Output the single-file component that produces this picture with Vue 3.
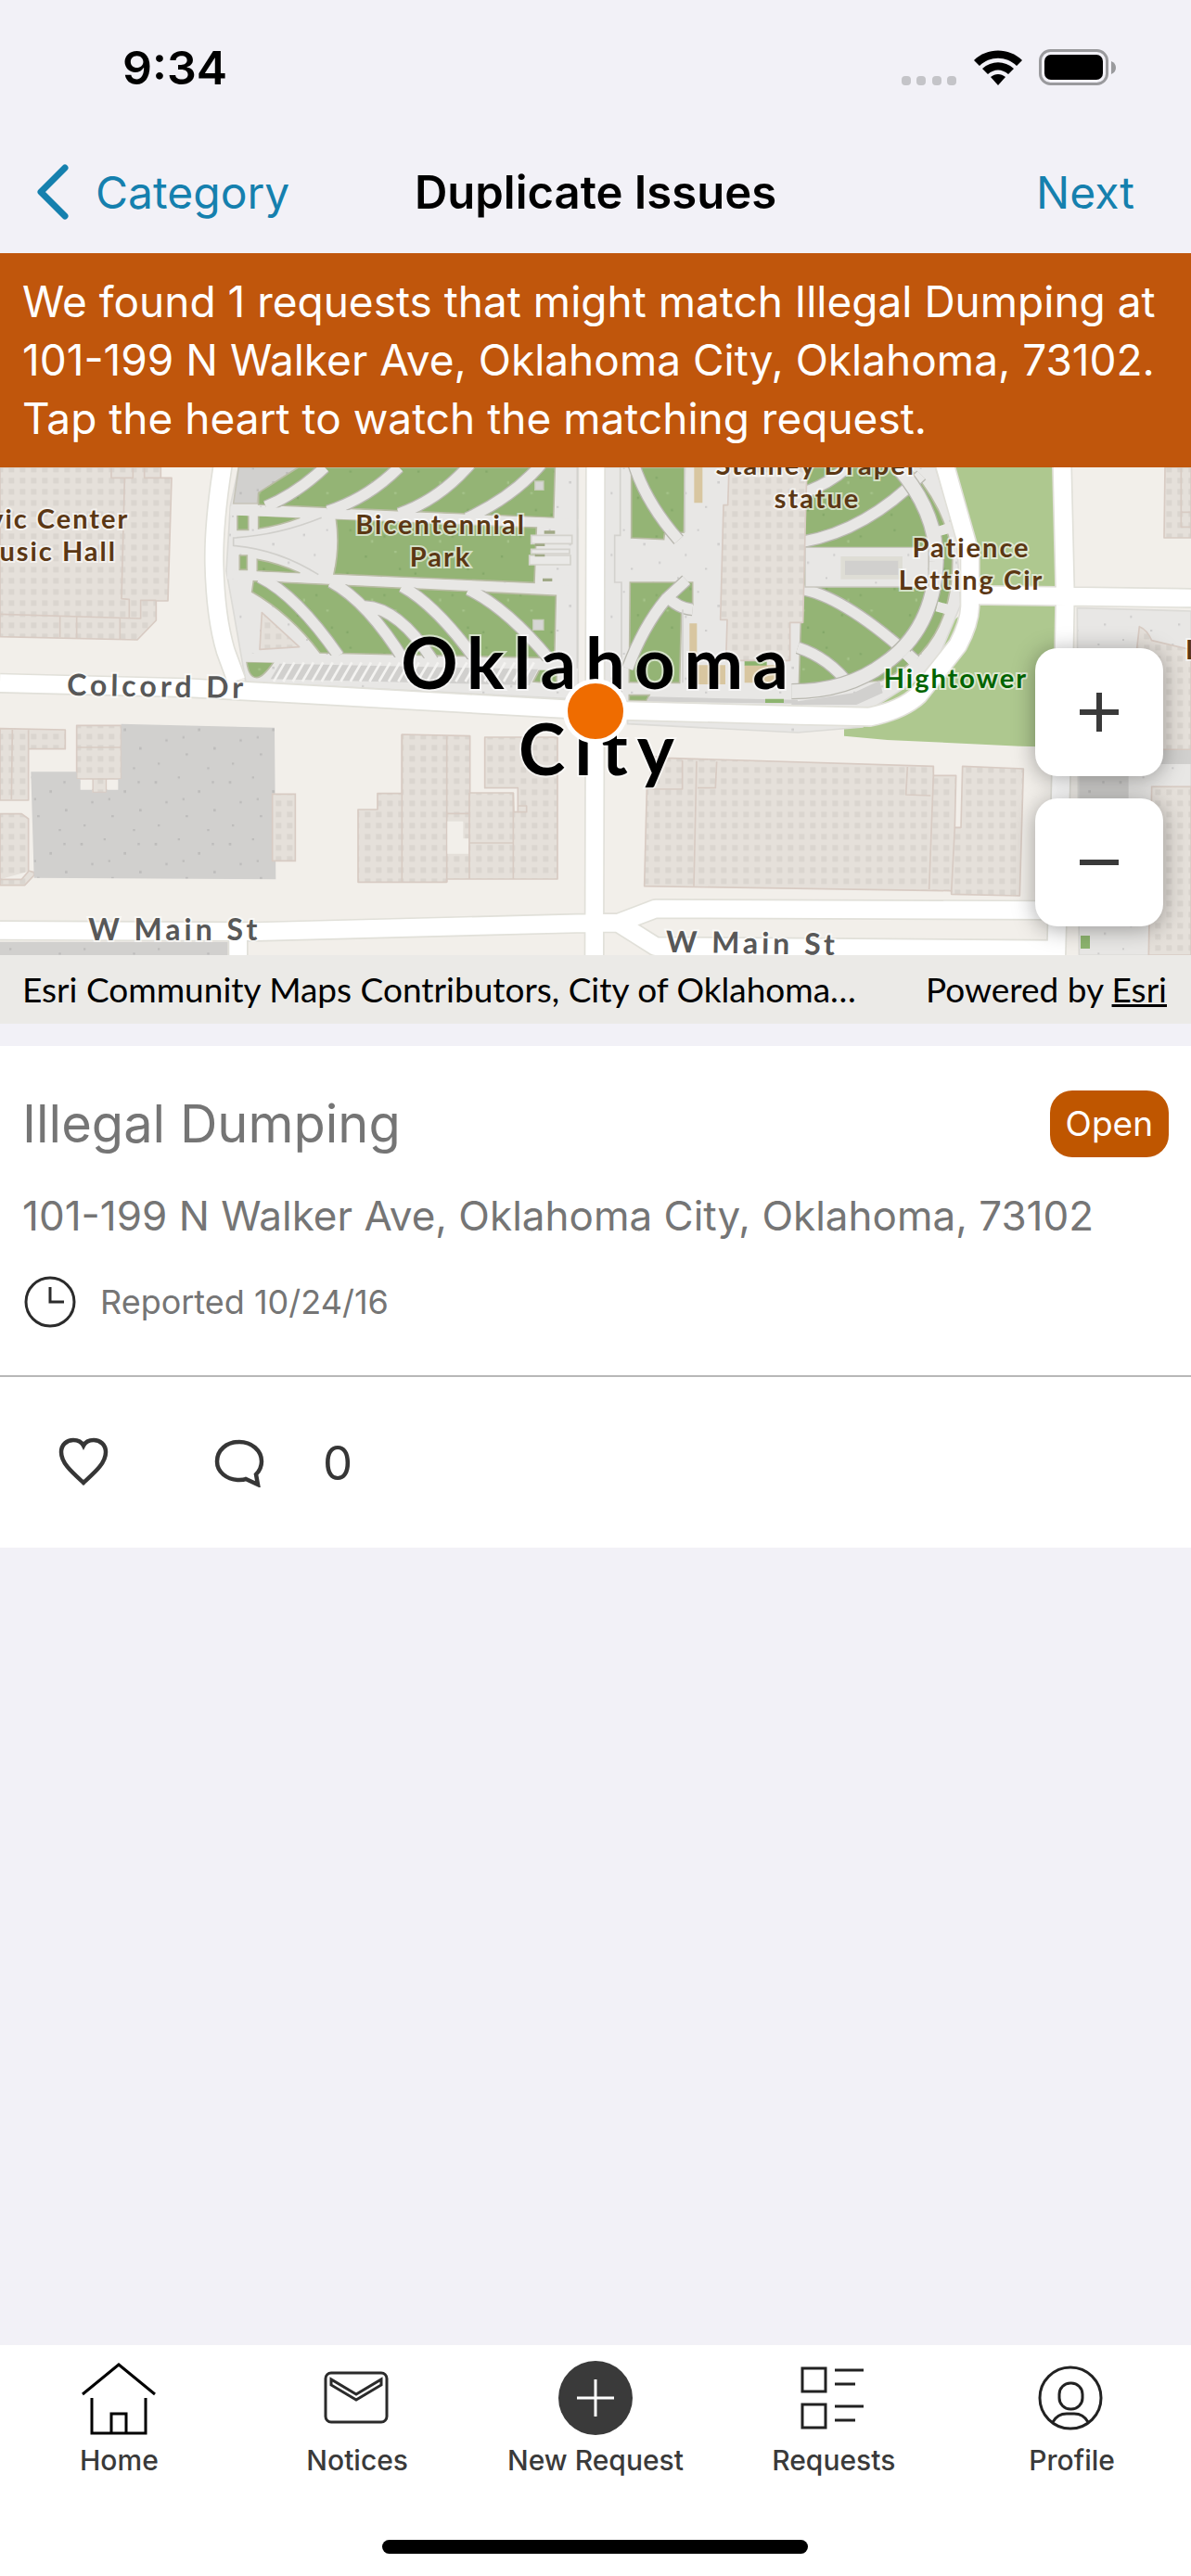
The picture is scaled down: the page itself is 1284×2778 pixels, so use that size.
<script setup>
import { ref } from 'vue'

const address = '101-199 N Walker Ave, Oklahoma City, Oklahoma, 73102'
const issue = { type: 'Illegal Dumping', status: 'Open', reported: '10/24/16', comments: 0 }
const tabs = ['Home', 'Notices', 'New Request', 'Requests', 'Profile']
const stalls = Array.from({ length: 27 }, (_, i) => 885 + i * 31)
const watching = ref(false)
</script>

<template>
  <div class="app">
    <header class="top">
      <div class="status">
        <time class="clock">9:34</time>
        <div class="indicators">
          <svg width="60" height="40" viewBox="0 0 60 40" aria-hidden="true" fill="#c4c4c8">
            <rect x="0" y="29" width="10" height="10" rx="4" /><rect x="16" y="29" width="10" height="10" rx="4" />
            <rect x="33" y="29" width="10" height="10" rx="4" /><rect x="49" y="29" width="10" height="10" rx="4" />
          </svg>
          <svg width="52" height="40" viewBox="0 0 52 40" aria-hidden="true">
            <path d="M0 12C14-2 38-2 52 12L46 18C35 7 17 7 6 18Z" />
            <path d="M9 21C19 12 33 12 43 21L37 27C30 21 22 21 15 27Z" />
            <path d="M18 30C23 26 29 26 34 30L26 39Z" />
          </svg>
          <svg width="84" height="40" viewBox="0 0 84 40" aria-hidden="true">
            <rect x="1.5" y="1.5" width="72" height="36" rx="11" fill="none" stroke="#9a9a9d" stroke-width="3" />
            <rect x="6" y="6" width="63" height="27" rx="7" />
            <path d="M78 13Q83 15 83 20Q83 25 78 27Z" fill="#9a9a9d" />
          </svg>
        </div>
      </div>
      <nav class="bar">
        <button class="link back" type="button">
          <svg width="36" height="60" viewBox="0 0 36 60" aria-hidden="true">
            <path d="M31 4L5 30L31 56" fill="none" stroke="#1580ae" stroke-width="7" stroke-linecap="round" stroke-linejoin="round" />
          </svg>
          Category
        </button>
        <h1>Duplicate Issues</h1>
        <button class="link next" type="button">Next</button>
      </nav>
    </header>

    <p class="banner">We found 1 requests that might match {{ issue.type }} at<br>{{ address }}.<br>Tap the heart to watch the matching request.</p>

    <section class="map" aria-label="Map">
      <div class="canvas">
        <svg class="tiles" viewBox="0 15 3852 1578" preserveAspectRatio="xMidYMid slice">
          <defs>
            <pattern id="roof" x="28" y="13" width="36" height="36" patternUnits="userSpaceOnUse">
              <rect width="36" height="36" fill="#e5e0da" /><rect width="18" height="18" fill="#dad5cf" />
            </pattern>
            <pattern id="paving" width="240" height="200" patternUnits="userSpaceOnUse">
              <rect width="240" height="200" fill="#e8e7e5" />
              <path d="M20 30h7v7h-7zM95 15h6v6h-6zM160 60h8v7h-8zM55 95h6v7h-6zM210 120h7v7h-7zM120 140h7v6h-7zM30 170h6v6h-6zM190 185h6v6h-6z" fill="#cfcecd" />
            </pattern>
            <pattern id="lot" width="240" height="200" patternUnits="userSpaceOnUse">
              <rect width="240" height="200" fill="#d1d0ce" />
              <path d="M20 30h8v8h-8zM95 15h7v7h-7zM160 60h8v8h-8zM55 95h7v7h-7zM210 120h8v8h-8zM120 140h8v7h-8zM30 170h7v7h-7zM190 185h7v7h-7zM205 30h7v7h-7zM110 85h7v7h-7z" fill="#bdbcbb" />
            </pattern>
            <pattern id="grass" width="220" height="190" patternUnits="userSpaceOnUse">
              <rect width="220" height="190" fill="#94b475" />
              <path d="M30 25h7v7h-7zM140 45h7v7h-7zM80 110h7v7h-7zM190 150h7v7h-7zM20 165h7v7h-7z" fill="#84a869" />
              <path d="M100 60h7v9h-7zM175 95h8v7h-8z" fill="#a5c389" />
            </pattern>
          </defs>

          <rect y="15" width="3852" height="1578" fill="#f2efea" />
          <path d="M3050 15H3440V920L3300 917L2870 897L2730 884V820L3137 465Z" fill="#aec88f" />

          <g fill="url(#paving)" stroke="#dcdbd7" stroke-width="5">
            <path d="M772 15L745 140L732 350L755 480L795 710L1870 765V15Z" />
            <path d="M1955 15H3025L3092 220L3107 460L3040 620L2970 700L2820 795L1955 780Z" />
            <path d="M2030 845L2580 873L2790 855V830H2030Z" />
            <path d="M3484 470L3852 480V1593H3490Z" />
          </g>

          <path d="M772 15H965L836 98L832 132H755Z" fill="url(#lot)" stroke="#c6c4b9" stroke-width="5" />
          <g fill="url(#grass)" stroke="#b9bca4" stroke-width="5">
            <path d="M836 97L965 15H1795L1790 178L836 135Z" />
            <path d="M836 170L970 178Q900 205 836 213Z" />
            <path d="M768 168H803V217H768ZM775 300H799V346H775Z" />
            <path d="M832 313Q900 325 970 357L832 350Z" />
            <path d="M1087 182L1735 210L1728 388L1080 360Q1100 270 1087 182Z" />
            <path d="M820 383L1798 430L1793 632L1035 615Q940 490 815 418Z" />
            <path d="M798 645H885Q850 695 830 695Q805 695 798 645Z" />
            <path d="M2042 15H2215L2212 225L2149 230L2147 248L2042 243Z" />
            <path d="M2038 387H2240V460L2204 475L2198 712L2035 710Z" />
            <path d="M2035 752H2100L2090 770H2035Z" />
            <path d="M2608 15H2940Q3060 150 3080 300Q3085 600 2850 705L2584 725L2600 180Z" />
            <path d="M1725 708L1750 660H1800V715Z" />
          </g>
          <g fill="none" stroke="#b9b8b0" stroke-width="42">
            <path d="M1050 15Q960 100 860 142M1290 15Q1190 115 1060 157M1520 5Q1420 120 1290 165M1750 5Q1660 110 1510 180" />
            <path d="M840 370Q960 430 1095 625M1070 385Q1190 450 1310 645M1300 400Q1410 460 1540 640M1515 410Q1640 470 1780 640M1180 465Q1290 470 1400 640" />
            <path d="M2050 5Q2090 130 2195 250M2030 665Q2080 530 2155 440L2220 380M2155 430Q2190 470 2240 475" />
            <path d="M2600 255Q2800 220 2980 40M2590 100Q2680 70 2740 15M2600 410Q2740 440 2960 640M2580 598Q2680 630 2750 722" />
          </g>
          <g fill="none" stroke="#e8e7e5" stroke-width="34">
            <path d="M1050 15Q960 100 860 142M1290 15Q1190 115 1060 157M1520 5Q1420 120 1290 165M1750 5Q1660 110 1510 180" />
            <path d="M840 370Q960 430 1095 625M1070 385Q1190 450 1310 645M1300 400Q1410 460 1540 640M1515 410Q1640 470 1780 640M1180 465Q1290 470 1400 640" />
            <path d="M2050 5Q2090 130 2195 250M2030 665Q2080 530 2155 440L2220 380M2155 430Q2190 470 2240 475" />
            <path d="M2600 255Q2800 220 2980 40M2590 100Q2680 70 2740 15M2600 410Q2740 440 2960 640M2580 598Q2680 630 2750 722" />
          </g>
          <path d="M2905 15Q3030 160 3028 320Q3020 540 2860 650Q2740 740 2560 740" fill="none" stroke="#b9b8b0" stroke-width="52" />
          <path d="M2905 15Q3030 160 3028 320Q3020 540 2860 650Q2740 740 2560 740" fill="none" stroke="#e8e7e5" stroke-width="44" />
          <g fill="none" stroke="#e8e7e5">
            <path d="M745 155L1300 175L1870 197" stroke-width="30" />
            <path d="M735 362L1290 387L1865 412" stroke-width="28" />
            <path d="M795 630L1870 660" stroke-width="28" />
            <path d="M3035 222L3090 205M3030 465L3085 480M2930 620L2975 665" stroke-width="32" />
          </g>
          <path d="M1040 178Q900 235 755 243V268Q900 280 1030 362" fill="none" stroke="#d0cfcb" stroke-width="5" />
          <path d="M2604 274H3003V402H2604Z" fill="url(#paving)" stroke="#c9c8c0" stroke-width="4" />
          <path d="M2726 310H2912V370H2726Z" fill="#d1d0ce" stroke="#deddd5" stroke-width="14" />
          <path d="M2560 775L2760 745L2845 705L2855 745L2770 783H2560Z" fill="#d1d0ce" />
          <path d="M2100 757L2580 767V779L2092 773Z" fill="#d1d0ce" />
          <path d="M905 650L1740 668L1712 720L875 700Z" fill="#d1d0ce" />
          <path v-for="x in stalls" :key="x" :d="`M${x} 708L${x + 36} 646`" stroke="#f4f3f1" stroke-width="8" />
          <path d="M1718 235H1850V262H1718ZM1718 280H1842V294H1718ZM1712 300H1845V330H1712Z" fill="#eae9e7" stroke="#d3d2cc" stroke-width="5" />
          <path d="M1760 220H1795V230H1760ZM1730 262H1762V270H1730ZM1730 296H1762V304H1730ZM1755 374H1786V384H1755Z" fill="#a1a987" />
          <path d="M1730 60H1758V88H1730ZM1724 508H1758V541H1724Z" fill="#d6d6d4" stroke="#c5cbb8" stroke-width="4" />
          <path d="M1867 15V665M2006 15V235H1988V387H2010V760M2215 15V225M2208 475V712" fill="none" stroke="#d3d2ce" stroke-width="5" />
          <path d="M2245 15H2272V130H2245ZM2230 520H2254V620H2230ZM2256 655H2346V717H2256ZM2408 655H2528V712H2408Z" fill="#d8c6a0" />
          <path d="M2408 640H2480V656H2408ZM2475 764H2535V777H2475ZM3495 1530H3525V1572H3495Z" fill="#8db46f" />

          <g fill="url(#roof)" stroke="#d8cbc3" stroke-width="5" stroke-linejoin="round">
            <path d="M0 15H520V49H555L543 447H505V510L444 573L0 563Z" />
            <path d="M360 15V49H430V15M467 15V49H520M403 52L393 440L418 442V500M0 490L455 504V445H505M194 495V565M248 497V567M388 502V570" fill="none" />
            <path d="M847 485L968 596L840 604Z" />
            <path d="M0 860L211 864V926H92V1092H0ZM40 864L37 1089M92 864V930" />
            <path d="M248 850H392V1023H344V1067H300V1023H248ZM248 921H392M300 1023H344" />
            <path d="M0 1136H70L92 1152V1320L110 1325V1335L80 1367H0ZM0 1348H70L92 1322" />
            <path d="M1158 1122H1221V1070H1300V879L1520 884V1068H1660L1662 1130H1675V1052H1568V888H1803V1347H1445V1357H1158Z" />
            <path d="M1300 879V1357M1445 884V1357M1518 1068V1347M1660 1068V1347M1445 1135H1518M1518 1230H1660M1675 1130H1703V1110H1675" fill="none" />
            <path d="M2150 955L3019 982V1012H3092L3088 1180H3108L3113 982L3310 990L3298 1401L3077 1396V1385L2084 1370L2092 1055L2115 950Z" />
            <path d="M2253 965L2244 1370M2207 962V1056H2092M2318 967L2314 1052H2256M2935 984L2930 1074L3010 1077M3019 1012L3005 1380M3088 1180L3077 1390" fill="none" />
            <path d="M2358 15L2354 137H2340L2330 508H2352L2348 640H2555V517H2597L2605 180L2610 15Z" />
            <path d="M3768 15L3765 243H3852V15ZM3820 15V208H3852M3820 160H3852" />
            <path d="M3685 530Q3710 540 3725 575L3852 605V928H3640Z" />
            <path d="M3725 1048H3852V1593H3715Z" />
          </g>
          <path d="M1447 1160H1498V1216H1515V1265H1447ZM260 1026H298V1056H260ZM346 1026H382V1056H346Z" fill="#f2efea" />
          <path d="M392 845L888 857L892 1348L110 1343L100 1000H248V1023H260V1058H298V1067H344V1058H382V1023H392ZM0 1550H737V1593H0Z" fill="url(#lot)" />
          <path d="M881 1072H955V1288H881Z" fill="url(#roof)" stroke="#d8cbc3" stroke-width="5" />
          <path d="M3490 930H3852V975H3650V1090H3490Z" fill="url(#lot)" />

          <g fill="none" stroke="#e1e0d9" stroke-width="66" stroke-linejoin="round">
            <path d="M721 5Q690 200 693 330Q697 500 730 610L765 705M1926 5L1922 1600M0 713L600 728L1000 750L1850 798L2580 817L2813 822Q2920 800 2972 750L3098 590Q3135 520 3137 465V295L3055 5M3435 5L3445 430L3440 700L3416 1600M3137 428L3852 438M0 1513L830 1517L1926 1489H2000L2120 1443L3400 1448M2000 1489L2120 1565L3430 1575M770 1540V1600" />
          </g>
          <g fill="none" stroke="#fff" stroke-width="56" stroke-linejoin="round">
            <path d="M721 5Q690 200 693 330Q697 500 730 610L765 705M1926 5L1922 1600M0 713L600 728L1000 750L1850 798L2580 817L2813 822Q2920 800 2972 750L3098 590Q3135 520 3137 465V295L3055 5M3435 5L3445 430L3440 700L3416 1600M3137 428L3852 438M0 1513L830 1517L1926 1489H2000L2120 1443L3400 1448M2000 1489L2120 1565L3430 1575M770 1540V1600" />
          </g>

          <g class="place">
            <text x="418" y="213" text-anchor="end">Civic Center</text>
            <text x="378" y="319" text-anchor="end">Music Hall</text>
            <text x="1425" y="230">Bicentennial</text>
            <text x="1425" y="335">Park</text>
            <text x="2643" y="40">Stanley Draper</text>
            <text x="2643" y="147">statue</text>
            <text x="3141" y="305">Patience</text>
            <text x="3141" y="410">Letting Cir</text>
            <text x="3834" y="636" text-anchor="start">L</text>
            <text class="park" x="3091" y="728">Hightower</text>
          </g>
          <g class="street">
            <text x="507" y="757" transform="rotate(1 507 757)">Colcord Dr</text>
            <text x="565" y="1545">W Main St</text>
            <text x="2432" y="1588" transform="rotate(1 2432 1588)">W Main St</text>
          </g>
          <g class="city">
            <text x="1938" y="731">Oklahoma</text>
            <text x="1944" y="1010">City</text>
          </g>
        </svg>
        <span class="pin"></span>
        <div class="zoom">
          <button type="button" aria-label="Zoom in">
            <svg width="42" height="42" viewBox="0 0 42 42"><path d="M0 21H42M21 0V42" stroke="#3a3a3a" stroke-width="6" /></svg>
          </button>
          <button type="button" aria-label="Zoom out">
            <svg width="42" height="42" viewBox="0 0 42 42"><path d="M0 21H42" stroke="#3a3a3a" stroke-width="6" /></svg>
          </button>
        </div>
      </div>
      <footer class="credit">
        <span>Esri Community Maps Contributors, City of Oklahoma…</span>
        <span>Powered by <a href="#esri">Esri</a></span>
      </footer>
    </section>

    <article class="card">
      <div class="details">
        <div class="heading">
          <h2>{{ issue.type }}</h2>
          <span class="badge">{{ issue.status }}</span>
        </div>
        <p class="address">{{ address }}</p>
        <p class="reported">
          <svg width="56" height="56" viewBox="0 0 56 56" aria-hidden="true" fill="none" stroke="#2b2b2b" stroke-width="3">
            <circle cx="28" cy="28" r="26" /><path d="M28 12V28H43" />
          </svg>
          Reported {{ issue.reported }}
        </p>
      </div>
      <div class="actions">
        <button type="button" aria-label="Watch" :aria-pressed="watching" @click="watching = !watching">
          <svg width="54" height="54" viewBox="0 0 54 54" fill="none" stroke="#363636" stroke-width="4.5">
            <path d="M27 49C15 38 3 28 3 16C3 8 9 3 16 3C21 3 25 5 27 9C29 5 33 3 38 3C45 3 51 8 51 16C51 28 39 38 27 49Z" />
          </svg>
        </button>
        <button class="comments" type="button" aria-label="Comments">
          <svg width="54" height="54" viewBox="0 0 54 54" fill="none" stroke="#363636" stroke-width="4.5">
            <path d="M27 5C40 5 51 14 51 26C51 32 48 37 45 40L47 51L34 45C32 46 30 46 27 46C13 46 3 37 3 26C3 14 13 5 27 5Z" />
          </svg>
          <span>{{ issue.comments }}</span>
        </button>
      </div>
    </article>

    <nav class="tabs">
      <a v-for="tab in tabs" :key="tab" href="#tab">
        <svg v-if="tab === 'Home'" width="80" height="80" viewBox="0 0 80 80" fill="none" stroke="#000" stroke-width="3">
          <path d="M1 36L40 4L79 36M11 40V78H69V40M32 78V57H48V78" />
        </svg>
        <svg v-else-if="tab === 'Notices'" width="80" height="80" viewBox="0 0 80 80" fill="none" stroke="#2b2b2b" stroke-width="3">
          <rect x="6" y="13" width="66" height="53" rx="6" /><path d="M12 20V26L39 42L66 26V20L39 36Z" />
        </svg>
        <svg v-else-if="tab === 'New Request'" width="80" height="80" viewBox="0 0 80 80">
          <circle cx="40" cy="40" r="40" fill="#3a3a3a" /><path d="M20 40H60M40 20V60" stroke="#fff" stroke-width="3" />
        </svg>
        <svg v-else-if="tab === 'Requests'" width="80" height="80" viewBox="0 0 80 80" fill="none" stroke="#222" stroke-width="3">
          <path d="M6 8H31V33H6ZM6 47H31V72H6ZM41 10H72M41 25H63M41 49H72M41 64H63" />
        </svg>
        <svg v-else width="80" height="80" viewBox="0 0 80 80" fill="none" stroke="#222" stroke-width="3">
          <circle cx="38" cy="40" r="33" /><rect x="26" y="24" width="25" height="28" rx="12" /><path d="M19 66Q24 57 34 57H42Q52 57 57 66" />
        </svg>
        {{ tab }}
      </a>
      <span class="grip"></span>
    </nav>
  </div>
</template>

<style>
body { margin: 0; background: #f2f1f7; }
</style>

<style scoped>
.app { min-height: 100vh; display: flex; flex-direction: column; background: #f2f1f7; font-family: Inter, "Liberation Sans", sans-serif; color: #000; }
h1, h2, p { margin: 0; font-weight: 400; }
button { border: 0; margin: 0; padding: 0; background: none; font: inherit; color: inherit; }
svg { display: block; flex: none; }
.status { display: flex; justify-content: space-between; align-items: center; height: 145px; padding: 0 80px 0 132px; font-size: 50px; font-weight: 600; }
.indicators { display: flex; gap: 18px; }
.bar { display: grid; grid-template-columns: 1fr auto 1fr; align-items: center; height: 124px; padding: 0 39px 4px; font-size: 48px; }
.bar h1 { font-size: 49px; font-weight: 600; }
.link { color: #1580ae; }
.back { display: flex; align-items: center; gap: 28px; justify-self: start; }
.next { justify-self: end; padding-right: 22px; }
.banner { padding: 21px 24px; background: #c0560c; color: #fff; font-size: 46px; line-height: 63px; white-space: nowrap; }
.canvas { position: relative; height: 526px; overflow: hidden; }
.tiles { width: 100%; height: 100%; }
.tiles text { font-family: Lato, "Noto Sans", sans-serif; font-weight: 700; text-anchor: middle; paint-order: stroke; stroke: rgba(255, 255, 255, 0.6); stroke-width: 12px; }
.tiles text[text-anchor="end"] { text-anchor: end; }
.tiles text[text-anchor="start"] { text-anchor: start; }
.place text { font-size: 87px; letter-spacing: 6px; fill: #5b3714; }
.place .park { fill: #006400; }
.street text { font-size: 96px; letter-spacing: 12px; fill: #585858; }
.city text { font-size: 228px; letter-spacing: 30px; fill: #000; }
.pin { position: absolute; left: 50%; top: 50%; width: 60px; height: 60px; margin: -35px; border: 5px solid #fff; border-radius: 50%; background: #ef6c00; }
.zoom { position: absolute; right: 30px; bottom: 31px; display: grid; gap: 24px; }
.zoom button { display: grid; place-items: center; width: 138px; height: 138px; border-radius: 24px; background: #fff; box-shadow: 0 3px 24px rgba(0, 0, 0, 0.35); }
.credit { display: flex; justify-content: space-between; align-items: center; height: 72px; padding: 0 26px 2px 24px; background: #ebeae7; font-family: Lato, "Noto Sans", sans-serif; font-size: 37px; white-space: nowrap; }
.credit a { color: inherit; }
.card { margin-top: 24px; background: #fff; color: #757575; }
.details { padding: 48px 24px 51px; border-bottom: 2px solid #b8b8b8; }
.heading { display: flex; justify-content: space-between; align-items: center; }
h2 { font-size: 56px; line-height: 72px; }
.badge { padding: 0 17px; border-radius: 24px; background: #bf5600; color: #fff; font-size: 37px; line-height: 72px; }
.address { margin-top: 33px; font-size: 44px; line-height: 60px; white-space: nowrap; }
.reported { display: flex; align-items: center; gap: 26px; margin-top: 35px; padding-left: 2px; font-size: 36px; line-height: 56px; }
.actions { display: flex; align-items: center; gap: 114px; height: 184px; padding-left: 63px; color: #363636; font-size: 51px; }
.comments { display: flex; align-items: center; gap: 63px; }
.tabs { display: grid; grid-template-columns: repeat(5, 1fr); margin-top: auto; padding: 17px 0 24px; background: #fff; }
.tabs a { display: flex; flex-direction: column; align-items: center; gap: 9px; color: #3a3a3a; font-size: 30px; font-weight: 500; line-height: 36px; text-decoration: none; }
.grip { grid-column: 1 / -1; justify-self: center; width: 459px; height: 15px; margin-top: 68px; border-radius: 8px; background: #000; }
</style>
